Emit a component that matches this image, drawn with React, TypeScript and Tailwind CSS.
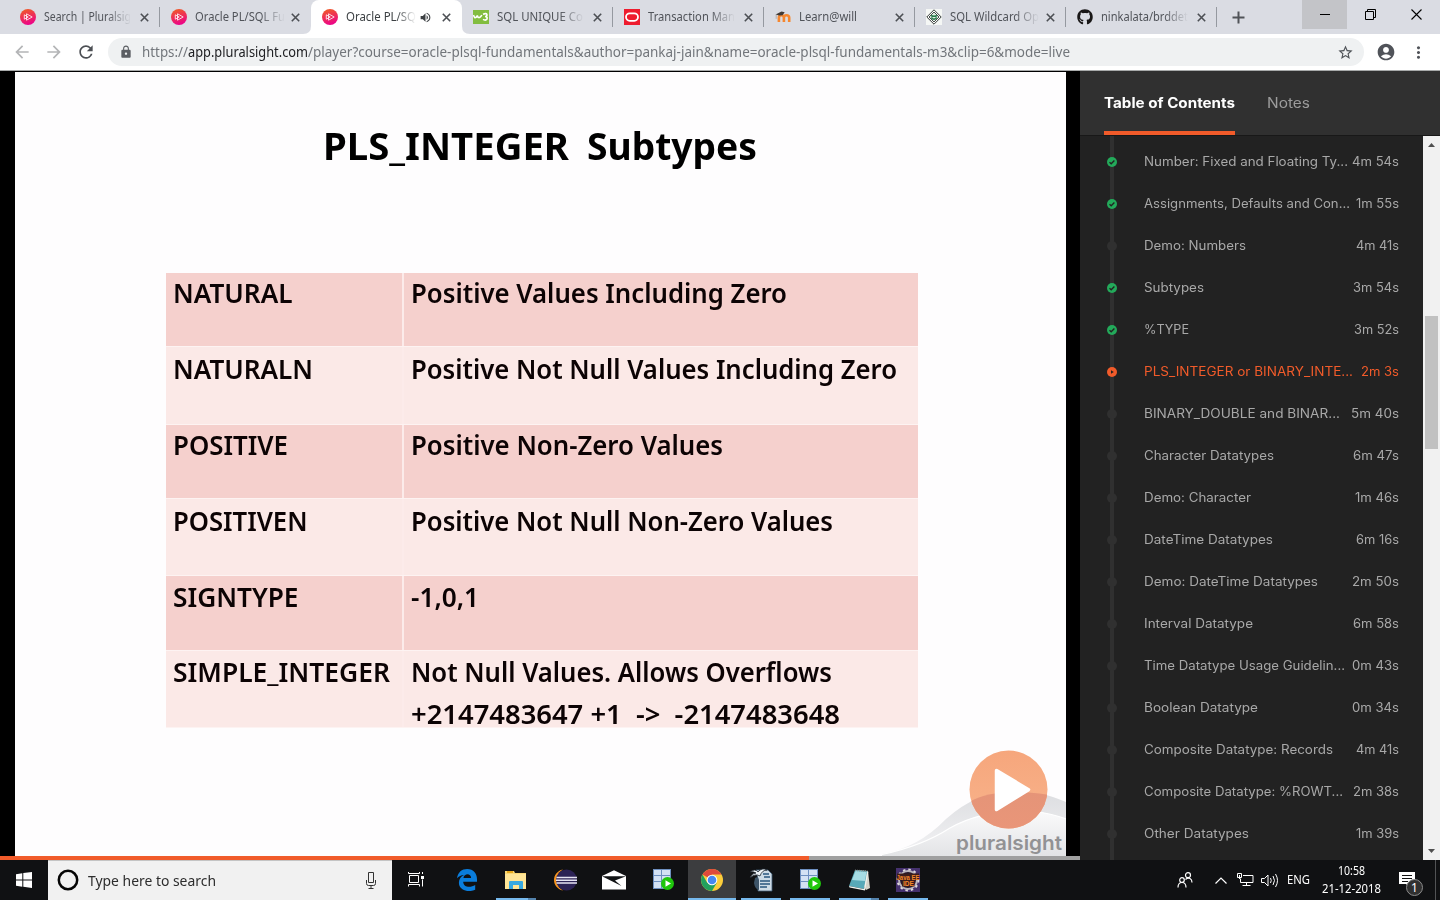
import { useLayoutEffect, useRef, type ReactNode } from "react";
import { FaGithub } from "react-icons/fa";
import { MdStarBorder, MdAccountCircle, MdLock, MdMoreVert, MdRefresh, MdArrowBack, MdArrowForward, MdVolumeUp } from "react-icons/md";

/** Single line of text condensed or widened to a set width. */
function Fit({ w, className = "", children }: { w: number; className?: string; children: string }) {
  const ref = useRef<HTMLSpanElement>(null);
  useLayoutEffect(() => {
    const el = ref.current;
    if (!el) return;
    el.style.transform = "none";
    const natural = el.getBoundingClientRect().width;
    if (natural > 0) el.style.transform = `scaleX(${w / natural})`;
  }, [w, children]);
  return (
    <span className={`block shrink-0 whitespace-pre ${className}`} style={{ width: w }}>
      <span ref={ref} className="inline-block origin-left">{children}</span>
    </span>
  );
}

function PluralsightIcon({ id }: { id: string }) {
  return (
    <svg width="16" height="16" viewBox="0 0 16 16">
      <defs>
        <linearGradient id={id} x1="0.3" y1="0" x2="0.6" y2="1">
          <stop offset="0" stopColor="#f05a28" />
          <stop offset="1" stopColor="#ec008c" />
        </linearGradient>
      </defs>
      <circle cx="8" cy="8" r="8" fill={`url(#${id})`} />
      <path d="M6.5 4.8v6.4L12.2 8zM4.3 5.8v4.4L8.2 8z" fill="none" stroke="#fff" strokeWidth="0.8" />
    </svg>
  );
}

function W3Icon() {
  return (
    <svg width="16" height="16" viewBox="0 0 16 16">
      <path d="M0 1h16v14H0z" fill="#82bd3f" />
      <path d="M.5 6q.9 3.400 2.500 2.400Q4 7.800 4.300 6.500q.5 2.600 2.300 1.900Q8 7.800 8.800 6" fill="none" stroke="#fff" strokeWidth="1.600" />
      <path d="M10 5.200q3.600-1.400 4 .6 0 1.600-1.900 1.700 2.700.2 1.900 2.500-1.300 1.900-4 .4" fill="none" stroke="#fff" strokeWidth="1.600" />
    </svg>
  );
}

function OracleIcon() {
  return (
    <svg width="16" height="16" viewBox="0 0 16 16">
      <path d="M0 0h16v16H0z" fill="#ee1c2e" />
      <rect x="2" y="4.4" width="12" height="7.4" rx="3.7" fill="none" stroke="#fff" strokeWidth="1.8" />
    </svg>
  );
}

function MoodleIcon() {
  return (
    <svg width="16" height="16" viewBox="0 0 16 16">
      <path d="M3.9 13V8.700q0-2.400 2.500-2.400t2.500 2.400V13M8.900 13V8.700q0-2.400 2.600-2.400T14.200 8.700V13" fill="none" stroke="#f6872f" strokeWidth="2.600" />
      <path d="M.6 5.400 6.500 2.600l3.200.7-2.200 3-3.300.2z" fill="#413a36" />
      <path d="M1.200 5.400v4.400" stroke="#9c9b9a" strokeWidth=".7" />
    </svg>
  );
}

function WildcardIcon() {
  return (
    <svg width="16" height="16" viewBox="0 0 16 16">
      <path d="M0 0h16v16H0z" fill="#f5f7f5" />
      <path d="M8 .8 15.2 8 8 15.2.8 8z" fill="#fff" stroke="#343a38" strokeWidth="1" />
      <path d="M8 3 13 8l-5 5-5-5z" fill="#deeee3" stroke="#343a38" strokeWidth=".9" />
      <path d="M5 6.500q3 1.500 6 0M5.300 8.500q2.700 3.500 5.400 0" stroke="#2c7a4d" strokeWidth="1.600" fill="none" />
    </svg>
  );
}

function CloseX() {
  return (
    <svg width="9" height="9" viewBox="0 0 9 9">
      <path d="m.8.8 7.4 7.4M8.2.8.8 8.2" stroke="#4c4f54" strokeWidth="1.6" />
    </svg>
  );
}

type TabInfo = { icon: ReactNode; title: string; w: number; box: string; fade?: boolean; active?: boolean; sep?: boolean };

const tabs: TabInfo[] = [
  { icon: <PluralsightIcon id="ps1" />, title: "Search | Pluralsig", w: 87, box: "w-[87px]", fade: true, sep: true },
  { icon: <PluralsightIcon id="ps2" />, title: "Oracle PL/SQL Fu", w: 90, box: "w-[90px] -mr-[3px]", fade: true },
  { icon: <PluralsightIcon id="ps3" />, title: "Oracle PL/SQ", w: 70, box: "w-[70px] -mr-[4px]", fade: true, active: true },
  { icon: <W3Icon />, title: "SQL UNIQUE Co", w: 86, box: "w-[87px]", fade: true, sep: true },
  { icon: <OracleIcon />, title: "Transaction Man", w: 87, box: "w-[87px]", fade: true, sep: true },
  { icon: <MoodleIcon />, title: "Learn@will", w: 58, box: "w-[87px]", sep: true },
  { icon: <WildcardIcon />, title: "SQL Wildcard Op", w: 89, box: "w-[89px] -mr-[2px]", fade: true, sep: true },
  { icon: <FaGithub size={16} color="#191717" />, title: "ninkalata/brddet", w: 87, box: "w-[87px]", fade: true, sep: true },
];

function Tab({ t }: { t: TabInfo }) {
  return (
    <div className={`relative flex h-[34px] w-[151px] shrink-0 items-center pl-[11px] ${t.active ? "bg-white rounded-t-lg" : ""}`}>
      {t.active && (
        <svg className="absolute -left-2 bottom-0" width="8" height="8"><path d="M8 0v8H0Q8 8 8 0" fill="#fff" /></svg>
      )}
      {t.active && (
        <svg className="absolute -right-2 bottom-0" width="8" height="8"><path d="M0 0v8h8Q0 8 0 0" fill="#fff" /></svg>
      )}
      {t.icon}
      <div className={`ml-2 text-[12px] leading-4 ${t.box} ${t.active ? "text-[#3c4043]" : "text-[#505359]"} ${t.fade ? "[mask-image:linear-gradient(to_right,black_72%,transparent)]" : ""}`}>
        <Fit w={t.w}>{t.title}</Fit>
      </div>
      {t.active && <div className="ml-[7px]"><MdVolumeUp size={13} color="#3c4043" /></div>}
      <div className={t.active ? "ml-[9.500px]" : "ml-[8.500px]"}><CloseX /></div>
      {t.sep && <div className="absolute right-0 top-[7px] h-5 w-px bg-[#9599a0]" />}
    </div>
  );
}

function TabStrip() {
  return (
    <div className="flex h-[34px] bg-[#dadce3] pl-[9px]">
      {tabs.map((t, i) => <Tab key={i} t={t} />)}
      <div className="flex w-[85px] items-center pl-[15px]">
        <svg width="13" height="13"><path d="M6.5.5v12M.5 6.5h12" stroke="#505358" strokeWidth="2" /></svg>
      </div>
      <div className="flex h-[29px]">
        <div className="flex w-[45px] items-center justify-center bg-[#c3c4c8]">
          <svg width="10" height="10"><path d="M0 4.500h10" stroke="#000" /></svg>
        </div>
        <div className="flex w-[46px] items-center justify-center">
          <svg width="11" height="11"><path d="M.5 2.5h8v8h-8zM2.5 2.5v-2h8v8h-2" fill="none" stroke="#000" /></svg>
        </div>
        <div className="flex w-[46px] items-center justify-center">
          <svg width="11" height="11"><path d="m.5.5 10 10M10.500.5.5 10.500" stroke="#000" strokeWidth="1.1" /></svg>
        </div>
      </div>
    </div>
  );
}

function AddressBar() {
  return (
    <div className="flex h-[37px] items-center border-b border-[#a8aaaa] bg-white">
      <div className="flex w-[108px] items-center pl-3">
        <MdArrowBack size={20} color="#b4b5b7" />
        <div className="ml-3"><MdArrowForward size={20} color="#b4b5b7" /></div>
        <div className="ml-3"><MdRefresh size={20} color="#4c4f54" /></div>
      </div>
      <div className="flex h-7 w-[1256px] items-center rounded-full bg-[#eff1f2] pl-[11px] pr-[10px]">
        <MdLock size={14} color="#5b5e63" />
        <div className="ml-[9px] flex text-[14px] leading-5 text-[#72767b]">
          <Fit w={46}>https://</Fit>
          <Fit w={120} className="text-[#202124]">app.pluralsight.com</Fit>
          <Fit w={762}>/player?course=oracle-plsql-fundamentals&author=pankaj-jain&name=oracle-plsql-fundamentals-m3&clip=6&mode=live</Fit>
        </div>
        <div className="ml-auto"><MdStarBorder size={17} color="#4f5358" /></div>
      </div>
      <div className="ml-3"><MdAccountCircle size={20} color="#505359" /></div>
      <div className="ml-[13px]"><MdMoreVert size={19} color="#505359" /></div>
    </div>
  );
}

type Line = { text: string; w: number };
const rows: { name: Line; lines: Line[]; cls: string }[] = [
  { name: { text: "NATURAL", w: 119.5 }, lines: [{ text: "Positive Values Including Zero", w: 376 }], cls: "h-[74px] bg-[#f5d0cd] leading-[40px]" },
  { name: { text: "NATURALN", w: 140 }, lines: [{ text: "Positive Not Null Values Including Zero", w: 486 }], cls: "h-[78px] bg-[#fbe9e7] leading-[43px]" },
  { name: { text: "POSITIVE", w: 115 }, lines: [{ text: "Positive Non-Zero Values", w: 312 }], cls: "h-[74px] bg-[#f5d0cd] leading-[40px]" },
  { name: { text: "POSITIVEN", w: 134.5 }, lines: [{ text: "Positive Not Null Non-Zero Values", w: 422 }], cls: "h-[77px] bg-[#fbe9e7] leading-[43px]" },
  { name: { text: "SIGNTYPE", w: 125.5 }, lines: [{ text: "-1,0,1", w: 68 }], cls: "h-[75px] bg-[#f5d0cd] leading-[41px]" },
  { name: { text: "SIMPLE_INTEGER", w: 217 }, lines: [{ text: "Not Null Values. Allows Overflows", w: 421 }, { text: "+2147483647 +1  ->  -2147483648", w: 429 }], cls: "h-[77px] bg-[#fbe9e7] leading-[42px]" },
];

function Watermark() {
  return (
    <svg className="absolute bottom-0 right-0" width="190" height="112" viewBox="876 744 190 112">
      <defs>
        <linearGradient id="hill1" x1="0" y1="0" x2="0" y2="1">
          <stop offset="0" stopColor="#dcdde0" /><stop offset="1" stopColor="#f3f3f5" />
        </linearGradient>
        <linearGradient id="hill2" x1="0" y1="0" x2="0" y2="1">
          <stop offset="0" stopColor="#fafafb" /><stop offset="1" stopColor="#e3e4e6" />
        </linearGradient>
        <linearGradient id="disc" x1="0" y1="0" x2="0" y2="1">
          <stop offset="0" stopColor="#f6a67c" /><stop offset="1" stopColor="#f8b48c" />
        </linearGradient>
        <linearGradient id="disc2" x1="0" y1="0" x2="0" y2="1">
          <stop offset="0" stopColor="#e59478" /><stop offset="1" stopColor="#ea9679" />
        </linearGradient>
        <clipPath id="discClip"><circle cx="1008.500" cy="789.500" r="39" /></clipPath>
      </defs>
      <path d="M882 854Q918 848 946 819Q985 784 1035 792Q1052 796 1066 802V856H882z" fill="url(#hill1)" />
      <path d="M882 854.500Q922 846 950 828Q985 808 1036 812Q1050 813 1066 819V856H882z" fill="url(#hill2)" />
      <path d="M882 854.500Q922 846 950 828Q985 808 1036 812Q1050 813 1066 819" fill="none" stroke="#fff" strokeWidth="1.2" />
      <circle cx="1008.500" cy="789.500" r="39" fill="url(#disc)" />
      <path clipPath="url(#discClip)" d="M965 805Q990 786 1050 795V835H965z" fill="url(#disc2)" />
      <path d="M996.500 770.500 1028.500 789.700 996.500 809.500z" fill="#fff" stroke="#fff" strokeWidth="3.500" strokeLinejoin="round" />
      <text x="956" y="850" textLength="106" lengthAdjust="spacingAndGlyphs" fontFamily="Inter, sans-serif" fontWeight="600" fontSize="20" fill="#929294">pluralsight</text>
    </svg>
  );
}

function Player() {
  return (
    <div className="flex w-[1080px] flex-col bg-black pt-px">
      <div className="relative ml-[15px] flex h-[784px] w-[1051px] flex-col bg-[#fefdfe] pl-[151px] text-[#0c0304]">
        <div className="flex h-[201px] gap-[18px] pl-[157px] pt-[48px] text-[38px] font-bold leading-[50px] text-black">
          <Fit w={246}>PLS_INTEGER</Fit>
          <Fit w={170}>Subtypes</Fit>
        </div>
        <div className="w-[752px] text-[27.5px] font-semibold">
          {rows.map((r) => (
            <div key={r.name.text} className={`flex border-b border-[#fdf3f2] ${r.cls}`}>
              <div className="w-[238px] border-r-2 border-[#fcebea] pl-[7px]">
                <Fit w={r.name.w}>{r.name.text}</Fit>
              </div>
              <div className="pl-[7px]">
                {r.lines.map((l) => <Fit key={l.text} w={l.w}>{l.text}</Fit>)}
              </div>
            </div>
          ))}
        </div>
        <Watermark />
      </div>
      <div className="flex h-1 bg-[#a0a0a0]"><div className="w-[809px] bg-[#f15b2a]" /></div>
    </div>
  );
}

type Clip = { title: string; w: number; time: string; tw: number; state?: "done" | "now" };
const clips: Clip[] = [
  { title: "Number: Fixed and Floating Ty...", w: 204, time: "4m 54s", tw: 47, state: "done" },
  { title: "Assignments, Defaults and Con...", w: 206, time: "1m 55s", tw: 43, state: "done" },
  { title: "Demo: Numbers", w: 102, time: "4m 41s", tw: 43 },
  { title: "Subtypes", w: 60, time: "3m 54s", tw: 46, state: "done" },
  { title: "%TYPE", w: 45, time: "3m 52s", tw: 45, state: "done" },
  { title: "PLS_INTEGER or BINARY_INTE...", w: 209, time: "2m 3s", tw: 38, state: "now" },
  { title: "BINARY_DOUBLE and BINAR...", w: 196, time: "5m 40s", tw: 48 },
  { title: "Character Datatypes", w: 130, time: "6m 47s", tw: 46 },
  { title: "Demo: Character", w: 107, time: "1m 46s", tw: 44 },
  { title: "DateTime Datatypes", w: 129, time: "6m 16s", tw: 43 },
  { title: "Demo: DateTime Datatypes", w: 174, time: "2m 50s", tw: 47 },
  { title: "Interval Datatype", w: 109, time: "6m 58s", tw: 46 },
  { title: "Time Datatype Usage Guidelin...", w: 201, time: "0m 43s", tw: 47 },
  { title: "Boolean Datatype", w: 114, time: "0m 34s", tw: 47 },
  { title: "Composite Datatype: Records", w: 189, time: "4m 41s", tw: 43 },
  { title: "Composite Datatype: %ROWT...", w: 199, time: "2m 38s", tw: 46 },
  { title: "Other Datatypes", w: 105, time: "1m 39s", tw: 43 },
];

function StateDot({ state }: { state?: "done" | "now" }) {
  return (
    <svg width="10" height="10" viewBox="0 0 10 10">
      <circle cx="5" cy="5" r="5" fill={state === "done" ? "#23aa5a" : state === "now" ? "#f15b2a" : "#303030"} />
      {state === "done" && <path d="m2.500 5.200 1.700 1.600 3.200-3.300" fill="none" stroke="#222" strokeWidth="1.300" />}
      {state === "now" && <path d="M4 3.200 6.800 5 4 6.800z" fill="#222" />}
    </svg>
  );
}

function Sidebar() {
  return (
    <div className="flex w-[360px] flex-col bg-[#222] font-['Inter',sans-serif]">
      <div className="flex h-[65px] gap-8 border-b border-[#181818] bg-[#303030] pl-6 text-[14px]">
        <div className="h-16 border-b-4 border-[#f15b2a] pt-[22px] font-bold leading-5 text-white"><Fit w={131}>Table of Contents</Fit></div>
        <div className="pt-[22px] leading-5 text-[#9c9c9c]"><Fit w={43}>Notes</Fit></div>
      </div>
      <div className="flex h-[724px]">
        <div className="relative w-[343px] overflow-hidden pt-[5px] text-[12.5px]">
          <div className="absolute left-[30px] top-0 h-full w-1 bg-[#303030]" />
          {clips.map((c) => (
            <div key={c.title} className={`relative flex h-[42px] items-center pl-[27px] pr-6 ${c.state === "now" ? "text-[#f15b2a]" : "text-[#a8a8a8]"}`}>
              <StateDot state={c.state} />
              <div className="ml-[27px] flex flex-1 justify-between">
                <Fit w={c.w}>{c.title}</Fit>
                <Fit w={c.tw}>{c.time}</Fit>
              </div>
            </div>
          ))}
        </div>
        <div className="flex w-[17px] flex-col items-center bg-[#f1f1f1]">
          <svg width="17" height="17"><path d="M5 11h7L8.500 7z" fill="#505050" /></svg>
          <div className="mt-[163px] h-[133px] w-[13px] bg-[#c1c1c1]" />
          <svg className="mt-auto" width="17" height="17"><path d="M5 6h7L8.500 10z" fill="#505050" /></svg>
        </div>
      </div>
    </div>
  );
}

const folder = (
  <svg width="24" height="24" viewBox="0 0 24 24">
    <path d="M1 3h9l1 2h11v16H1z" fill="#f8d775" />
    <path d="M3 3h6v2H3z" fill="#e9a91b" />
    <path d="M1 6h21v15H1z" fill="#ffe596" />
    <path d="M5 21v-7q0-1 1-1h12q1 0 1 1v7h-4v-4H9v4z" fill="#37a9e1" />
  </svg>
);

const eclipse = (
  <svg width="24" height="24" viewBox="0 0 24 24">
    <path d="M10 1.500C-2 4-2 20 10 22.500C2 18 2 6 10 1.500z" fill="#f7941e" />
    <circle cx="13.500" cy="12" r="10.500" fill="#2c2255" />
    <path d="M3.500 9.500h20.500M3 12.200h21M3.500 14.900h20.500" stroke="#e6e3f2" strokeWidth="1.500" />
  </svg>
);

const mail = (
  <svg width="24" height="20" viewBox="0 0 24 20">
    <path d="M0 6 12 .300 24 6v13.500H0z" fill="#fff" />
    <path d="M0 6.200 19.500 16 13 10.500 24 6.200z" fill="#111315" />
  </svg>
);

function DbIcon() {
  return (
    <svg width="22" height="24" viewBox="0 0 22 24">
      <path d="M1 1h18v20H1z" fill="#6d8fc0" />
      <path d="M2 2h7v5H2zM10 2h8v5h-8zM2 8h7v5H2zM10 8h8v5h-8zM2 14h7v6H2zM10 14h8v6h-8z" fill="#d3e1f4" />
      <circle cx="15.500" cy="15.500" r="6.500" fill="#1fc70c" />
      <path d="M13.500 12.200v6.600l5.500-3.300z" fill="#fff" />
    </svg>
  );
}

const chrome = (
  <svg width="22" height="22" viewBox="0 0 22 22">
    <circle cx="11" cy="11" r="11" fill="#fbcd3b" />
    <path d="M11 11 1.500 5.500A11 11 0 0 1 20.500 5.500H11z" fill="#df4a3c" />
    <path d="M1.500 5.500A11 11 0 0 0 11 22l4.800-8.300L6.200 13.800z" fill="#22a05e" />
    <circle cx="11" cy="11" r="5.300" fill="#fff" />
    <circle cx="11" cy="11" r="4.300" fill="#4688f1" />
  </svg>
);

const writer = (
  <svg width="24" height="24" viewBox="0 0 24 24">
    <path d="M7 2h12l4 4v17H9V11z" fill="#cddbe6" stroke="#3f5b74" strokeWidth=".800" />
    <path d="M14 6h6M15 9h6M11 13h10M11 16h10M11 19h7" stroke="#29577f" strokeWidth="1.600" />
    <path d="M1 4q5-4 8 0 4-5 9-2-5 0-7 6-5-3-10 2 2-5 6-5-3-2-6-1z" fill="#eef4f8" stroke="#1a222b" strokeWidth=".800" />
    <path d="M6 10q3-2 4 2v10q-4-1-5-7z" fill="#3d5468" />
  </svg>
);

const notepad = (
  <svg width="24" height="24" viewBox="0 0 24 24">
    <path d="m8 2 13 1 2 17-4 2z" fill="#d5d3c9" />
    <path d="m8 2 12 1-3 18-15-3z" fill="#58a9b8" />
    <path d="m8.500 3 11 1-1.600 9L5 12z" fill="#a6dce3" />
    <path d="m2 18 15 3 3.500-18 .800 1L18 22.500 2.500 19.500z" fill="#f0f3ef" />
    <path d="M8 2.300 20.500 3.300" stroke="#8d9390" strokeWidth="1.500" strokeDasharray="1 1" />
  </svg>
);

const javaee = (
  <svg width="24" height="24" viewBox="0 0 24 24">
    <path d="M0 0h24v24H0z" fill="#45316e" />
    <circle cx="12" cy="12" r="9" fill="#24172c" stroke="#bbb5bd" strokeWidth="2" />
    <circle cx="12" cy="12" r="10.500" fill="none" stroke="#ded8dc" strokeWidth="1.800" strokeDasharray="2.500 3" />
    <path d="M1 5.500h22v6.500H1zM6 11.500h12.500v7H6z" fill="#3a1c1c" />
    <g fill="#f6882b" fontFamily="Liberation Sans, sans-serif" fontWeight="bold">
      <text x="0.500" y="11.500" fontSize="7.500" textLength="23" lengthAdjust="spacingAndGlyphs">Java EE</text>
      <text x="7" y="18" fontSize="8" textLength="11" lengthAdjust="spacingAndGlyphs">IDE</text>
    </g>
  </svg>
);

const taskView = (
  <svg width="17" height="17" viewBox="0 0 17 17">
    <path d="M1.500 4.500h9v7h-9zM.500 1v1.500h11V1M.500 15.500v-2h11v2M14.500 1v2M14.500 8.500v7" fill="none" stroke="#fff" />
    <path d="M13 5h3v3h-3z" fill="#fff" />
  </svg>
);

const edge = (
  <svg width="20" height="22" viewBox="0 0 20 22">
    <path d="M0 9.300C.9 3.200 4.800 0 10.200 0 16.500 0 20 4.500 20 10.200v2.500H6.200c.2 5.800 7.300 6.300 12 3.300v4.700C10.800 24.200 1.900 21 1.900 13.800c0-3.700 2-6.300 5.100-7.800-2.800.2-5.300 1.300-7 3.300zM6.400 9.100h7.700c.1-4.900-6.900-5.200-7.700 0z" fill="#0a7ddc" />
  </svg>
);

const apps: { icon: ReactNode; bar?: "full" | "one" | "two" }[] = [
  { icon: edge },
  { icon: folder, bar: "two" },
  { icon: eclipse },
  { icon: mail },
  { icon: <DbIcon /> },
  { icon: chrome, bar: "full" },
  { icon: writer, bar: "one" },
  { icon: <DbIcon />, bar: "one" },
  { icon: notepad, bar: "two" },
  { icon: javaee, bar: "one" },
];

function Taskbar() {
  return (
    <div className="flex h-10 bg-[#101113] text-white">
      <div className="flex w-12 items-center justify-center">
        <svg width="16" height="16" viewBox="0 0 16 16"><path d="M0 2.200 6.300 1.300V7.500H0zM7.300 1.100 16 0v7.500H7.300zM0 8.500h6.300v6.200L0 13.800zM7.300 8.500H16V16l-8.700-1.200z" fill="#fff" /></svg>
      </div>
      <div className="flex w-[344px] items-center border-t border-[#c4c4c4] bg-[#f1f1f1] pl-[9px] pr-[14px] text-[15px] leading-5 text-[#2d2d2d]">
        <svg className="mb-px" width="22" height="22"><circle cx="11" cy="11" r="9.200" fill="none" stroke="#050505" strokeWidth="2.500" /></svg>
        <div className="mb-0.5 ml-[9px]"><Fit w={128}>Type here to search</Fit></div>
        <svg className="mb-px ml-auto" width="13" height="17"><path d="M3.500.5h5v10h-5zM1.500 8v3.500q0 2 2 2h5q2 0 2-2V8M6 13.500v3M3.500 16.500h5" fill="none" stroke="#333" /></svg>
      </div>
      <div className="flex w-[51px] items-center pb-px pl-[16px]">{taskView}</div>
      {apps.map((a, i) => (
        <div key={i} className={`relative mr-[1px] flex h-10 w-12 items-center justify-center ${a.bar === "full" ? "bg-[#3c3d3f]" : ""}`}>
          {a.icon}
          {a.bar === "full" && <div className="absolute bottom-0 left-0 h-0.5 w-12 bg-[#76b9ed]" />}
          {a.bar === "one" && <div className="absolute bottom-0 left-1 h-0.5 w-10 bg-[#76b9ed]" />}
          {a.bar === "two" && <div className="absolute bottom-0 left-1 h-0.5 w-10 border-r-8 border-[#5484ae] bg-[#76b9ed]" />}
        </div>
      ))}
      <div className="ml-auto flex items-center">
        <svg width="16" height="16" viewBox="0 0 16 16" fill="none" stroke="#fff" strokeWidth="1.200">
          <circle cx="5" cy="8" r="2.300" /><path d="M1 15.500q0-5 4-5t4 5" />
          <circle cx="11" cy="3.200" r="2.500" /><path d="M8.500 7.500q2-2 4.500-1 2 1 2 4" />
        </svg>
        <svg className="ml-[22px]" width="12" height="7"><path d="m.5 6.500 5.500-5.500 5.500 5.500" fill="none" stroke="#fff" strokeWidth="1.200" /></svg>
        <svg className="ml-[10px]" width="17" height="14" viewBox="0 0 17 14" fill="none" stroke="#fff"><path d="M6 2.500h10v7H3.500v-4M9.500 9.500v3M5.500 12.500h8M.5.500h4v4h-4zM2.500 2v4" /></svg>
        <svg className="ml-[7px]" width="17" height="15" viewBox="0 0 17 15" fill="none" stroke="#fff"><path d="M.500 5.500h3L7 2v11L3.500 9.500h-3zM9.500 5q1.500 2.500 0 5M12 3q3 4.500 0 9M14.500 1q4 6.500 0 13" /></svg>
        <div className="ml-[9px] text-[12px]"><Fit w={23}>ENG</Fit></div>
        <div className="ml-[11px] mr-px flex w-[60px] flex-col items-center text-[12px] leading-[18px]">
          <Fit w={27}>10:58</Fit>
          <Fit w={59}>21-12-2018</Fit>
        </div>
        <div className="relative ml-[17px] h-10 w-[36px]">
          <svg className="absolute left-0 top-3" width="16" height="17"><path d="M0 0h16v12H11v4l-4-4H0z" fill="#fff" /><path d="M3 3.500h10M3 6.500h10M3 9.500h6" stroke="#111" /></svg>
          <div className="absolute left-[7px] top-[19px] flex size-[17px] items-center justify-center rounded-full border border-[#8c8c8c] bg-[#303030] text-[12px] leading-none">1</div>
        </div>
        <div className="mr-1 h-10 w-px bg-[#525355]" />
      </div>
    </div>
  );
}

export default function App() {
  return (
    <div className="flex h-[900px] w-[1440px] flex-col overflow-hidden font-['Noto_Sans',sans-serif]">
      <TabStrip />
      <AddressBar />
      <div className="flex h-[789px]">
        <Player />
        <Sidebar />
      </div>
      <Taskbar />
    </div>
  );
}
